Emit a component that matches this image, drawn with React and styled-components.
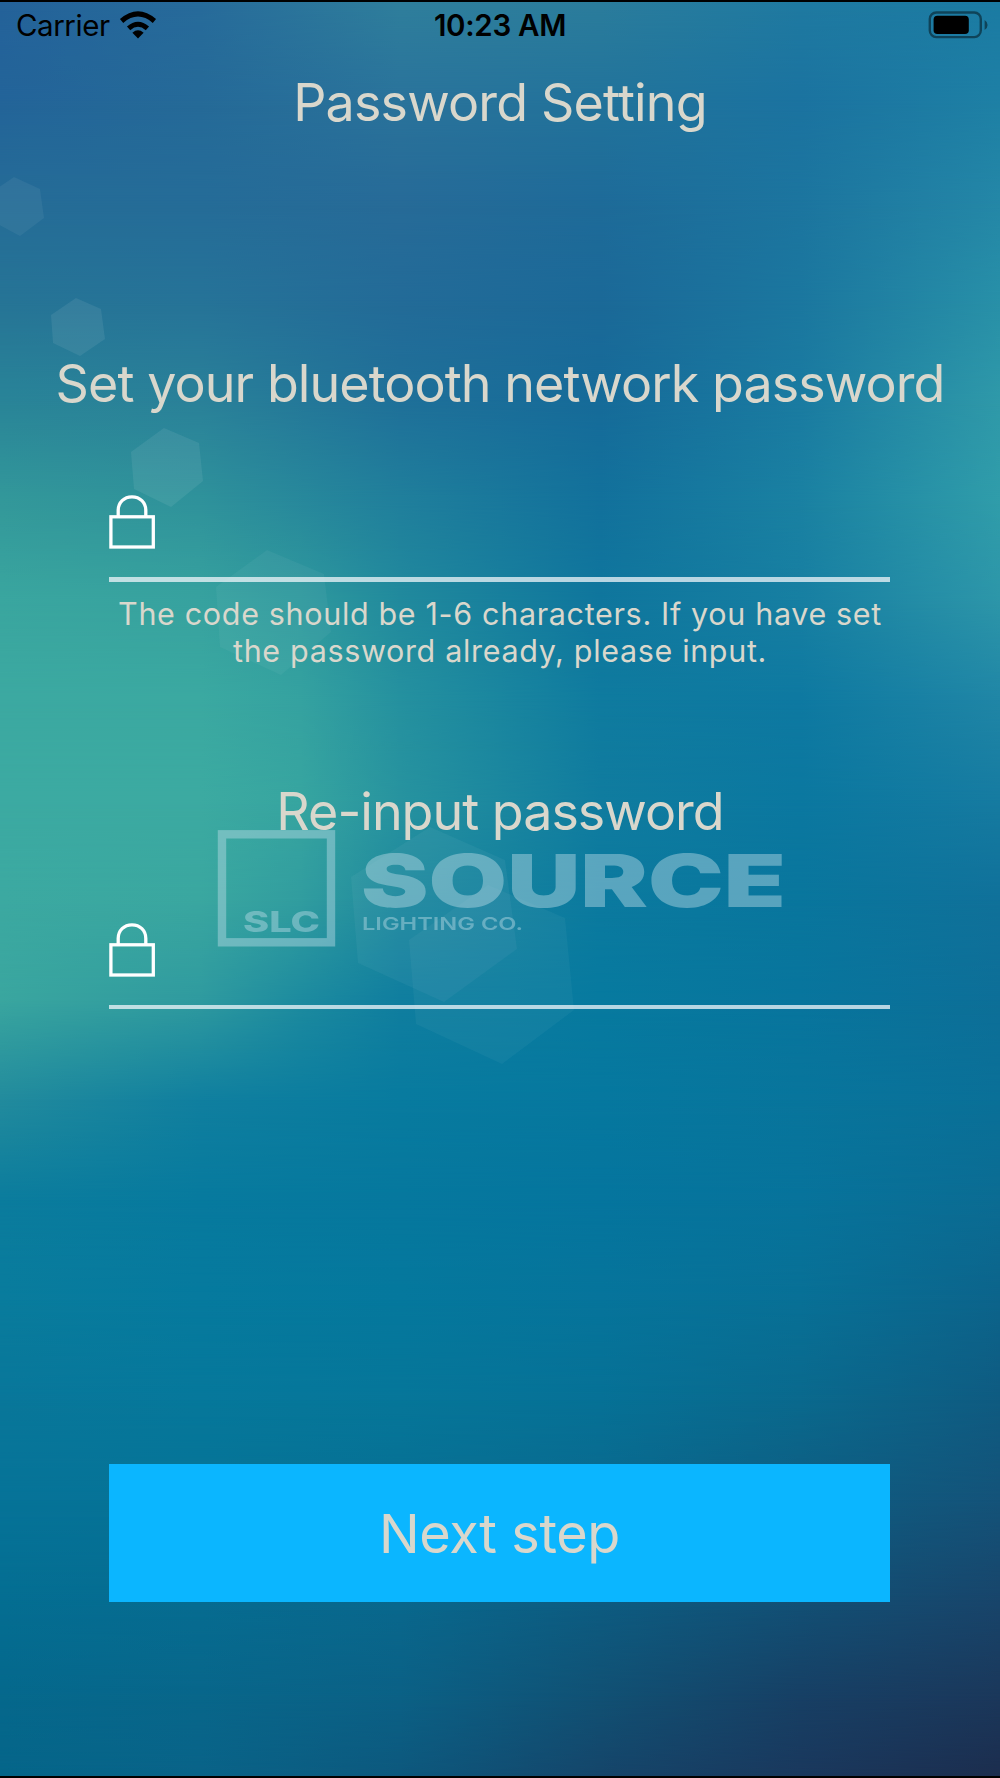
import React, { useState } from 'react';
import styled, { createGlobalStyle } from 'styled-components';

// colour of the wallpaper at a few heights, left to right
const bands = [
	{ y: 0, colors: ['#24629a', '#276b9b', '#2f7f9c', '#2b7d9c', '#1f7aa1', '#1b7ba3'] },
	{ y: 100, colors: ['#236499', '#256a98', '#2a739b', '#22739b', '#1b73a0', '#1e80a5'] },
	{ y: 200, colors: ['#256c97', '#256c98', '#276b98', '#1e6b99', '#1c759f', '#2487a7'] },
	{ y: 300, colors: ['#267496', '#267398', '#236b98', '#1b6998', '#1b779f', '#2890a8'] },
	{ y: 400, colors: ['#298498', '#2a8199', '#1f7099', '#166b99', '#1a7ba1', '#2f99a9'] },
	{ y: 500, colors: ['#33989a', '#2f929b', '#207f9c', '#12719c', '#1a81a2', '#309daa'] },
	{ y: 600, colors: ['#3aa69f', '#37a29f 20%', '#2f999d 30%', '#218a9d 40%', '#0f769d', '#177fa2', '#2d96a9'] },
	{ y: 700, colors: ['#3ca9a1', '#3ba9a1 20%', '#35a2a0 30%', '#25919f 40%', '#0f7b9f', '#0e79a1', '#2086a6'] },
	{ y: 800, colors: ['#3caaa2', '#3caaa1 20%', '#37a5a0 30%', '#27939f 40%', '#107c9f', '#0b78a0', '#167ba1'] },
	{ y: 900, colors: ['#3ca9a1', '#3aa7a0 20%', '#319d9f 30%', '#1e889e 40%', '#0b7a9f', '#09769d', '#10719a'] },
	{ y: 1000, colors: ['#3aa69f', '#2f9a9f 20%', '#1d8b9f 30%', '#107e9f 40%', '#077a9f', '#08759d', '#0d6f98'] },
	{ y: 1100, colors: ['#228b9d', '#107f9f', '#087b9f', '#06789f', '#08759c', '#0a7098'] },
	{ y: 1200, colors: ['#0b7c9d', '#077a9e', '#06789e', '#05759e', '#07739b', '#0b6c93'] },
	{ y: 1300, colors: ['#097c9d', '#067a9e', '#05789d', '#06749b', '#087096', '#0c648b'] },
	{ y: 1400, colors: ['#09779a', '#06789b', '#067699', '#067196', '#0a698d', '#0f5b81'] },
	{ y: 1500, colors: ['#067398', '#067397', '#077094', '#0a698e', '#0e5d82', '#145379'] },
	{ y: 1600, colors: ['#046e92', '#066c91', '#09688d', '#0d5c81', '#125075', '#18456b'] },
	{ y: 1700, colors: ['#05688c', '#08668a', '#0b6085', '#115073', '#173f64', '#1b375a'] },
	{ y: 1778, colors: ['#056589', '#096388', '#0d587d', '#15456a', '#1a385d', '#1c2d4e'] },
];

const hexagons = [
	{ points: '14,177 40,189 44,218 20,236 -6,222 -8,192', opacity: 0.055 },
	{ points: '76,298 101,309 105,339 80,356 53,343 51,315', opacity: 0.075 },
	{ points: '164,428 199,443 203,481 171,507 134,489 131,452', opacity: 0.075 },
	{ points: '267,550 324,574 331,632 281,675 220,647 216,587', opacity: 0.045 },
	{ points: '430,827 505,860 517,949 444,1002 358,963 351,877', opacity: 0.045 },
	{ points: '488,885 565,918 574,1010 502,1064 416,1024 409,940', opacity: 0.04 },
];

export default function App () {
	const [password, setPassword] = useState('');
	const [confirm, setConfirm] = useState('');

	return (
		<Screen>
			<GlobalStyle />
			<Wallpaper />
			<StatusBar>
				<Carrier>Carrier <Wifi /></Carrier>
				<Clock>10:23 AM</Clock>
				<Battery />
			</StatusBar>
			<Title>Password Setting</Title>
			<Label $top={221} $spacing={-0.93}>Set your bluetooth network password</Label>
			<Field $top={81} $line={5}>
				<Lock />
				<Input type='password' aria-label='Password' maxLength={6} value={password} onChange={e => setPassword(e.target.value)}/>
			</Field>
			<Hint>The code should be 1-6 characters. If you have set<br />the password already, please input.</Hint>
			<Label $top={113} $spacing={-1}>Re-input password</Label>
			<Field $top={81} $line={4}>
				<Lock />
				<Input type='password' aria-label='Re-input password' maxLength={6} value={confirm} onChange={e => setConfirm(e.target.value)}/>
			</Field>
			<Button>Next step</Button>
		</Screen>
	);
}

function Wallpaper () {
	return (
		<Backdrop>
			{bands.map((band, i) => (
				<Band
					key={band.y}
					$top={i === 0 ? 0 : bands[i - 1].y}
					$fade={i === 0 ? 0 : band.y - bands[i - 1].y}
					$colors={band.colors.join(', ')}
				/>
			))}
			<Artwork viewBox='0 0 1000 1778'>
				{hexagons.map(({ points, opacity }) => (
					<polygon key={points} points={points} fill='#fff' fillOpacity={opacity} />
				))}
				<g fill='#b9dbe6' opacity='0.45'>
					<rect x='222' y='834.3' width='109' height='108' fill='none' stroke='#b9dbe6' strokeWidth='8.4' />
					<LogoText x='243' y='931.5' fontSize='28' textLength='77'>SLC</LogoText>
					<LogoText x='361' y='906.5' fontSize='73' textLength='425' $weight={900}>SOURCE</LogoText>
					<LogoText x='362' y='930' fontSize='17.5' textLength='161' $weight={600}>LIGHTING CO.</LogoText>
				</g>
			</Artwork>
		</Backdrop>
	);
}

function LogoText (props) {
	return <Wordmark lengthAdjust='spacingAndGlyphs' {...props} />;
}

function Wifi () {
	return (
		<svg width='38' height='28' viewBox='0 0 38 28'>
			<path d='M19 27.5 L13.4 21.7 Q19 17 24.6 21.7 Z' />
			<path d='M9.6 17.3 Q19 9.2 28.4 17.3' fill='none' stroke='#000' strokeWidth='5' />
			<path d='M2.6 10 Q19 -4.2 35.4 10' fill='none' stroke='#000' strokeWidth='5' />
		</svg>
	);
}

function Battery () {
	return (
		<BatteryIcon width='60' height='28' viewBox='0 0 60 28'>
			<rect x='1.8' y='1.5' width='51' height='24.6' rx='6.5' fill='none' stroke='#000' strokeOpacity='0.45' strokeWidth='2.4' />
			<rect x='5.6' y='4.8' width='35.2' height='18.2' rx='3.8' />
			<path d='M56.6 9 Q59.6 10.8 59.6 14 Q59.6 17.2 56.6 19 Z' fillOpacity='0.45' />
		</BatteryIcon>
	);
}

function Lock () {
	return (
		<svg width='46' height='54' viewBox='0 0 46 54' fill='none' stroke='#fff' strokeWidth='3.3'>
			<rect x='1.9' y='21.8' width='42.4' height='30.2' />
			<path d='M9.2 22 V15.5 C9.2 7.5 15 1.8 23 1.8 C31 1.8 36.8 7.5 36.8 15.5 V22' />
		</svg>
	);
}

const GlobalStyle = createGlobalStyle`
	body {
		margin: 0;
		font-family: 'Inter', sans-serif;
	}
`;

const Screen = styled.div`
	position: relative;
	box-sizing: border-box;
	width: 1000px;
	height: 1778px;
	overflow: hidden;
	display: flex;
	flex-direction: column;
	align-items: center;
	border-top: 2px solid #000;
	border-bottom: 2px solid #000;
	color: #d9d7cc;
	isolation: isolate;
`;

const Backdrop = styled.div`
	position: absolute;
	top: -2px;
	left: 0;
	width: 1000px;
	height: 1778px;
	z-index: -1;
`;

const Band = styled.div`
	position: absolute;
	top: ${props => props.$top}px;
	left: 0;
	right: 0;
	bottom: 0;
	background: linear-gradient(to right, ${props => props.$colors});
	mask-image: linear-gradient(to bottom, ${props => props.$fade ? 'transparent' : '#000'} 0, #000 ${props => props.$fade}px);
`;

const Artwork = styled.svg`
	position: absolute;
	top: 0;
	left: 0;
	width: 1000px;
	height: 1778px;
`;

const Wordmark = styled.text`
	font-family: 'Inter', sans-serif;
	font-weight: ${props => props.$weight || 800};
`;

const StatusBar = styled.div`
	box-sizing: border-box;
	width: 100%;
	height: 46px;
	padding: 0 12px 0 16px;
	display: grid;
	grid-template-columns: 1fr auto 1fr;
	align-items: center;
	color: #000;
	font-size: 29.5px;
	line-height: 30px;
`;

const Carrier = styled.div`
	display: flex;
	align-items: center;
	gap: 9px;
	letter-spacing: -0.45px;
`;

const Clock = styled.div`
	margin-right: 4px;
	font-weight: 600;
	letter-spacing: -0.3px;
`;

const BatteryIcon = styled.svg`
	justify-self: end;
`;

const Title = styled.h1`
	margin: 25px 0 0;
	font-size: 52px;
	font-weight: 400;
	line-height: 60px;
	letter-spacing: -0.83px;
`;

const Label = styled.h2`
	margin: ${props => props.$top}px 0 0;
	font-size: 52px;
	font-weight: 400;
	line-height: 60px;
	letter-spacing: ${props => props.$spacing || 0}px;
	white-space: nowrap;
`;

const Field = styled.div`
	box-sizing: border-box;
	width: 781px;
	height: ${props => 82 + props.$line}px;
	margin-top: ${props => props.$top}px;
	margin-right: 1px;
	display: flex;
	align-items: flex-start;
	gap: 16px;
	border-bottom: ${props => props.$line}px solid rgba(240, 245, 250, 0.75);
`;

const Input = styled.input`
	flex: 1;
	height: 54px;
	padding: 0;
	border: none;
	outline: none;
	background: transparent;
	color: #d9d7cc;
	font-size: 40px;
`;

const Hint = styled.p`
	margin: 14px 0 0;
	font-size: 30.5px;
	line-height: 36.5px;
	letter-spacing: 0.66px;
	text-align: center;
	white-space: nowrap;
`;

const Button = styled.button`
	width: 781px;
	height: 138px;
	margin: 455px 1px 0 0;
	padding: 0;
	border: none;
	background: #0bb6ff;
	color: #d9d7cc;
	font-family: 'Inter', sans-serif;
	font-size: 54px;
	letter-spacing: -0.4px;
`;
